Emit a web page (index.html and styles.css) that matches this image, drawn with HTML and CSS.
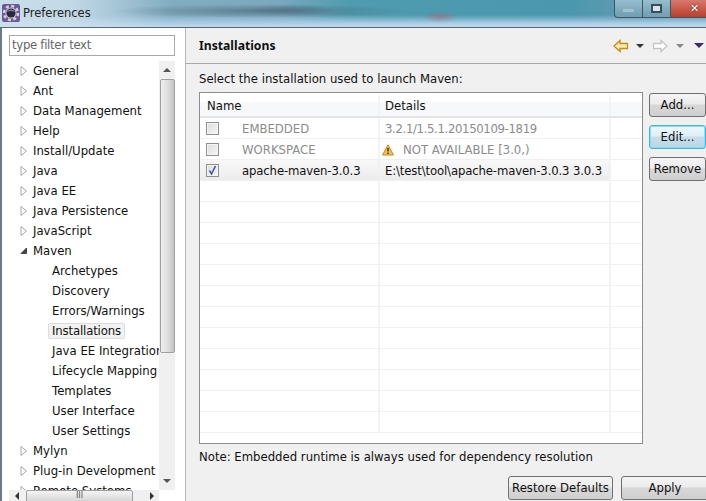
FILE: index.html
```html
<!DOCTYPE html>
<html lang="en">
<head>
  <meta charset="UTF-8">
  <title>Preferences</title>
  <link rel="stylesheet" href="styles.css">
</head>
<body>
  <div class="window">
    <div class="titlebar">
      <svg class="app-icon" width="18" height="18" viewBox="0 0 18 18">
        <rect x="0" y="0" width="18" height="18" rx="2" fill="#6a5a9c"/>
        <circle cx="9" cy="9" r="7" fill="none" stroke="#dcd8c8" stroke-width="2.4" stroke-dasharray="3 2.5"/>
        <circle cx="9" cy="9" r="5.6" fill="#d0ccc0"/>
        <circle cx="9" cy="9" r="4.6" fill="#2c2848"/>
        <path d="M5 8a4.500 4.500 0 0 1 8 0a6 3 0 0 0-8 0z" fill="#8a84b0"/>
      </svg>
      <span class="title">Preferences</span>
      <div class="controls">
        <div class="ctl"><span class="ctl-min"></span></div>
        <div class="ctl"><span class="ctl-max"></span></div>
        <div class="ctl ctl-close">&#10005;</div>
      </div>
    </div>

    <div class="content">
      <!-- left tree -->
      <div class="side">
        <div class="filter">type filter text</div>
        <div class="tree-wrap">
          <div class="tree-main">
            <ul class="tree">
              <li><svg class="tw" viewBox="0 0 8 10"><path d="M1 .5L6.500 5L1 9.500z" fill="#fff" stroke="#a6a6a6"/></svg>General</li>
              <li><svg class="tw" viewBox="0 0 8 10"><path d="M1 .5L6.500 5L1 9.500z" fill="#fff" stroke="#a6a6a6"/></svg>Ant</li>
              <li><svg class="tw" viewBox="0 0 8 10"><path d="M1 .5L6.500 5L1 9.500z" fill="#fff" stroke="#a6a6a6"/></svg>Data Management</li>
              <li><svg class="tw" viewBox="0 0 8 10"><path d="M1 .5L6.500 5L1 9.500z" fill="#fff" stroke="#a6a6a6"/></svg>Help</li>
              <li><svg class="tw" viewBox="0 0 8 10"><path d="M1 .5L6.500 5L1 9.500z" fill="#fff" stroke="#a6a6a6"/></svg>Install/Update</li>
              <li><svg class="tw" viewBox="0 0 8 10"><path d="M1 .5L6.500 5L1 9.500z" fill="#fff" stroke="#a6a6a6"/></svg>Java</li>
              <li><svg class="tw" viewBox="0 0 8 10"><path d="M1 .5L6.500 5L1 9.500z" fill="#fff" stroke="#a6a6a6"/></svg>Java EE</li>
              <li><svg class="tw" viewBox="0 0 8 10"><path d="M1 .5L6.500 5L1 9.500z" fill="#fff" stroke="#a6a6a6"/></svg>Java Persistence</li>
              <li><svg class="tw" viewBox="0 0 8 10"><path d="M1 .5L6.500 5L1 9.500z" fill="#fff" stroke="#a6a6a6"/></svg>JavaScript</li>
              <li><svg class="tw" viewBox="0 0 8 10"><path d="M1 7.500L6.500 2V7.500z" fill="#444" stroke="#444"/></svg>Maven</li>
              <li class="child">Archetypes</li>
              <li class="child">Discovery</li>
              <li class="child">Errors/Warnings</li>
              <li class="child"><span class="current">Installations</span></li>
              <li class="child">Java EE Integration</li>
              <li class="child">Lifecycle Mapping</li>
              <li class="child">Templates</li>
              <li class="child">User Interface</li>
              <li class="child">User Settings</li>
              <li><svg class="tw" viewBox="0 0 8 10"><path d="M1 .5L6.500 5L1 9.500z" fill="#fff" stroke="#a6a6a6"/></svg>Mylyn</li>
              <li><svg class="tw" viewBox="0 0 8 10"><path d="M1 .5L6.500 5L1 9.500z" fill="#fff" stroke="#a6a6a6"/></svg>Plug-in Development</li>
              <li><svg class="tw" viewBox="0 0 8 10"><path d="M1 .5L6.500 5L1 9.500z" fill="#fff" stroke="#a6a6a6"/></svg>Remote Systems</li>
            </ul>
            <div class="vscroll">
              <span class="arrow-up"></span>
              <div class="vthumb"></div>
              <span class="arrow-down"></span>
            </div>
          </div>
          <div class="hscroll">
            <span class="arrow-left"></span>
            <div class="hthumb">III</div>
            <span class="arrow-right"></span>
          </div>
        </div>
      </div>

      <!-- right page -->
      <div class="page">
        <div class="page-head">
          <h1>Installations</h1>
          <div class="nav">
            <svg width="16" height="14" viewBox="0 0 16 14"><path d="M1 7L7 1.500V4.500H14.500V9.500H7V12.500z" fill="#ffe9b4" stroke="#c88a10" stroke-width="1.300"/></svg>
            <span class="drop"></span>
            <svg class="nav-fwd" width="16" height="14" viewBox="0 0 16 14"><path d="M15 7L9 1.500V4.500H1.500V9.500H9V12.500z" fill="#fff" stroke="#c4c4c4" stroke-width="1.300"/></svg>
            <span class="drop drop-off"></span>
            <span class="drop drop-menu"></span>
          </div>
        </div>

        <div class="page-body">
          <p class="intro">Select the installation used to launch Maven:</p>
          <div class="table-area">
            <div class="table">
              <div class="row row-head"><div class="cell cell-name">Name</div><div class="cell cell-details">Details</div><div class="cell"></div></div>
              <div class="row row-off">
                <div class="cell cell-name"><span class="check"></span><span class="inst">EMBEDDED</span></div>
                <div class="cell cell-details"><span class="version">3.2.1/1.5.1.20150109-1819</span></div><div class="cell"></div>
              </div>
              <div class="row row-off">
                <div class="cell cell-name"><span class="check"></span><span class="inst">WORKSPACE</span></div>
                <div class="cell cell-details">
                  <svg class="warn" width="12" height="12" viewBox="0 0 12 12"><path d="M6 .8L11.500 11H.5z" fill="#f4c24a" stroke="#c88a20"/><path d="M6 4v3.500M6 8.500v1.500" stroke="#4a3410" stroke-width="1.500"/></svg>
                  NOT AVAILABLE [3.0,)
                </div><div class="cell"></div>
              </div>
              <div class="row row-sel">
                <div class="cell cell-name">
                  <span class="check checked"><svg width="11" height="11" viewBox="0 0 11 11"><path d="M2.500 5.500L4.500 9L8.500 1" fill="none" stroke="#3a4ea8" stroke-width="1.500"/></svg></span>
                  <span class="inst">apache-maven-3.0.3</span>
                </div>
                <div class="cell cell-details">E:\test\tool\apache-maven-3.0.3 3.0.3</div><div class="cell"></div>
              </div>
              <div class="row"><div class="cell cell-name"></div><div class="cell cell-details"></div><div class="cell"></div></div>
              <div class="row"><div class="cell cell-name"></div><div class="cell cell-details"></div><div class="cell"></div></div>
              <div class="row"><div class="cell cell-name"></div><div class="cell cell-details"></div><div class="cell"></div></div>
              <div class="row"><div class="cell cell-name"></div><div class="cell cell-details"></div><div class="cell"></div></div>
              <div class="row"><div class="cell cell-name"></div><div class="cell cell-details"></div><div class="cell"></div></div>
              <div class="row"><div class="cell cell-name"></div><div class="cell cell-details"></div><div class="cell"></div></div>
              <div class="row"><div class="cell cell-name"></div><div class="cell cell-details"></div><div class="cell"></div></div>
              <div class="row"><div class="cell cell-name"></div><div class="cell cell-details"></div><div class="cell"></div></div>
              <div class="row"><div class="cell cell-name"></div><div class="cell cell-details"></div><div class="cell"></div></div>
              <div class="row"><div class="cell cell-name"></div><div class="cell cell-details"></div><div class="cell"></div></div>
              <div class="row"><div class="cell cell-name"></div><div class="cell cell-details"></div><div class="cell"></div></div>
              <div class="row"><div class="cell cell-name"></div><div class="cell cell-details"></div><div class="cell"></div></div>
            </div>
            <div class="side-buttons">
              <button class="btn">Add...</button>
              <button class="btn btn-focus">Edit...</button>
              <button class="btn">Remove</button>
            </div>
          </div>
          <p class="note">Note: Embedded runtime is always used for dependency resolution</p>
          <div class="bottom-buttons">
            <button class="btn btn-restore">Restore Defaults</button>
            <button class="btn btn-apply">Apply</button>
          </div>
        </div>
      </div>
    </div>
  </div>
</body>
</html>
```

FILE: styles.css
```css
* {
    box-sizing: border-box;
}
html, body {
    margin: 0;
    height: 100%;
    overflow: hidden;
}
body {
    color: #111;
    font-family: "DejaVu Sans", sans-serif;
    font-size: 11.7px;
}
.window {
    display: flex;
    flex-direction: column;
    height: 501px;
    overflow: hidden;
    width: 706px;
}

/* title bar */
.titlebar {
    align-items: center;
    background:
        radial-gradient(ellipse 150px 7px at 260px 11px, rgba(70,90,110,.55), rgba(70,90,110,0)),
        radial-gradient(ellipse 45px 6px at 290px 10px, rgba(50,80,100,.35), rgba(50,80,100,0)),
        linear-gradient(90deg, rgba(205,224,236,.95) 0, rgba(205,224,236,.85) 70px, rgba(205,224,236,0) 170px),
        radial-gradient(ellipse 18px 6px at 440px 17px, rgba(170,100,110,.5), rgba(170,100,110,0)),
        linear-gradient(180deg, rgba(168,204,228,0) 15px, #a8cce4 23px, #c0d8ea 27px),
        linear-gradient(90deg, #86b0c4 100px, #7aa8bc 280px, #4f9bb0 350px, #4b97ad 570px, #5a9ab0 610px);
    border-bottom: 1px solid #566878;
    display: flex;
    flex: none;
    height: 28px;
    padding-left: 2px;
}
.app-icon {
    margin-bottom: 2px;
}
.title {
    color: #222;
    font-size: 11.5px;
    margin-bottom: 2px;
    margin-left: 3px;
}
.controls {
    align-self: flex-start;
    background: linear-gradient(180deg, rgba(190,215,228,.6), rgba(120,160,178,.6));
    border: 1px solid #44545f;
    border-radius: 0 0 4px 4px;
    border-top: 0;
    display: flex;
    flex: none;
    height: 18px;
    margin-left: auto;
    margin-right: -13px;
    overflow: hidden;
}
.ctl {
    align-items: center;
    border-right: 1px solid #44545f;
    display: flex;
    justify-content: center;
    width: 28px;
}
.ctl-min {
    background: #a8c0cc;
    height: 3px;
    margin-top: 3px;
    width: 11px;
}
.ctl-max {
    background: #d8e2e8;
    border: 2px solid #3c4c58;
    height: 9px;
    width: 11px;
}
.ctl-close {
    background: linear-gradient(180deg, #d8786c, #b8402c);
    border-right: 0;
    color: #fff;
    font-size: 11px;
    font-weight: bold;
    text-shadow: 0 0 2px #402018;
    width: 47px;
}

.content {
    border-left: 2px solid #6a7a88;
    display: flex;
    flex: 1;
    min-height: 0;
}

/* left side */
.side {
    background: #fff;
    border-right: 1px solid #b8b8b8;
    display: flex;
    flex: none;
    flex-direction: column;
    height: 473px;
    padding: 7px 10px 0 7px;
    width: 184px;
}
.filter {
    border: 1px solid #a8a8a8;
    color: #666;
    font-size: 11.7px;
    height: 21px;
    letter-spacing: -.3px;
    line-height: 19px;
    padding-left: 2px;
}
.tree-wrap {
    display: flex;
    flex: 1;
    flex-direction: column;
    margin-top: 5px;
    min-height: 0;
}
.tree-main {
    display: flex;
    flex: 1;
    min-height: 0;
    overflow: hidden;
}
.tree {
    flex: 1;
    list-style: none;
    margin: 0;
    min-width: 0;
    overflow: hidden;
    padding: 0;
    white-space: nowrap;
}
.tree li {
    align-items: center;
    display: flex;
    height: 20px;
    padding-left: 11px;
}
.tree .tw {
    flex: none;
    height: 10px;
    margin-right: 5px;
    width: 8px;
}
.tree .child {
    padding-left: 43px;
}
.current {
    background: #f2f2f2;
    border: 1px solid #dcdcdc;
    border-radius: 2px;
    letter-spacing: -.15px;
    margin-left: -4px;
    padding: 0 3px;
}
.vscroll {
    align-items: center;
    background: #f0f0f0;
    display: flex;
    flex: none;
    flex-direction: column;
    padding-top: 7px;
    width: 16px;
}
.vthumb {
    background: linear-gradient(90deg, #f0f0f0, #dcdcdc 55%, #c4c4c4);
    border: 1px solid #a0a0a0;
    border-radius: 2px;
    height: 274px;
    margin-top: 7px;
    width: 15px;
}
.arrow-up, .arrow-down, .arrow-left, .arrow-right {
    flex: none;
    height: 0;
    width: 0;
}
.arrow-up {
    border-bottom: 4px solid #555;
    border-left: 4px solid transparent;
    border-right: 4px solid transparent;
}
.arrow-down {
    border-left: 4px solid transparent;
    border-right: 4px solid transparent;
    border-top: 4px solid #555;
    margin-bottom: 7px;
    margin-top: auto;
}
.hscroll {
    align-items: flex-start;
    background: #f0f0f0;
    display: flex;
    flex: none;
    height: 11px;
    margin-right: 16px;
    padding: 0 5px 0 6px;
}
.arrow-left {
    border-bottom: 4px solid transparent;
    border-right: 4px solid #333;
    border-top: 4px solid transparent;
    margin-top: 2px;
}
.arrow-right {
    border-bottom: 4px solid transparent;
    border-left: 4px solid #333;
    border-top: 4px solid transparent;
    margin-left: auto;
    margin-top: 2px;
}
.hthumb {
    background: linear-gradient(180deg, #f4f4f4, #d4d4d4);
    border: 1px solid #a0a0a0;
    border-radius: 2px;
    color: #555;
    font-size: 8px;
    height: 13px;
    line-height: 10px;
    margin-left: 7px;
    text-align: center;
    width: 107px;
}

/* right page */
.page {
    background: #f0f0f0;
    display: flex;
    flex: 1;
    flex-direction: column;
    min-width: 0;
}
.page-head {
    align-items: center;
    border-bottom: 1px solid #a8a8a8;
    display: flex;
    flex: none;
    height: 36px;
    padding: 0 2px 0 13px;
}
.page-head h1 {
    font-family: "Noto Sans", sans-serif;
    font-size: 12.2px;
    font-weight: bold;
    margin: 0;
}
.nav {
    align-items: center;
    display: flex;
    margin-left: auto;
}
.nav-fwd {
    margin-left: 8px;
}
.drop {
    border-left: 4px solid transparent;
    border-right: 4px solid transparent;
    border-top: 4px solid #333;
    height: 0;
    margin-left: 7px;
    width: 0;
}
.nav-fwd + .drop {
    margin-left: 8px;
}
.drop-off {
    border-top-color: #888;
}
.nav .drop-menu {
    border-left-width: 5px;
    border-right-width: 5px;
    border-top: 5px solid #3a2a6a;
    margin-left: 10px;
}
.page-body {
    display: flex;
    flex: 1;
    flex-direction: column;
    min-height: 0;
    padding: 7px 0 0 13px;
}
.intro {
    height: 21px;
    line-height: 16px;
    margin: 0;
}
.table-area {
    display: flex;
    flex: none;
    gap: 6px;
    height: 352px;
}
.table {
    background: #fff;
    border: 1px solid #8c8c8c;
    flex: none;
    height: 352px;
    overflow: hidden;
    width: 444px;
}
.row {
    border-bottom: 1px solid #f0f0f0;
    display: flex;
    height: 21px;
}
.row-head {
    background: linear-gradient(180deg, #fff 9px, #f7f8f9 9px);
    border-bottom: 2px solid #e4e4e4;
    height: 25px;
    padding-top: 2px;
}
.cell {
    align-items: center;
    display: flex;
    flex: 1;
    white-space: nowrap;
}
.row-off .cell, .row-sel .cell {
    padding-top: 1px;
}
.cell-name {
    border-right: 2px solid #f0f4fa;
    flex: none;
    padding-left: 6px;
    width: 180px;
}
.row-head .cell-name {
    padding-left: 7px;
}
.cell-details {
    border-right: 2px solid #f0f4fa;
    flex: none;
    padding-left: 5px;
    width: 231px;
}
.row-off {
    color: #8c8c8c;
}
.version {
    letter-spacing: -.35px;
}
.row-sel .cell-name, .row-sel .cell-details {
    background: linear-gradient(180deg, #f8f8f8, #ececec);
    border-right-color: #f0f0f0;
    letter-spacing: -.14px;
}
.row-sel .cell-details {
    border-radius: 0 3px 3px 0;
}
.check {
    background: linear-gradient(135deg, #dcdcdc, #f6f6f6);
    border: 1px solid #8e8f8f;
    box-shadow: inset 0 0 0 1px #f4f4f4;
    display: inline-flex;
    flex: none;
    height: 13px;
    width: 13px;
}
.inst {
    margin-left: 23px;
}
.warn {
    flex: none;
    margin-left: -3px;
    margin-right: 9px;
}
.side-buttons {
    display: flex;
    flex-direction: column;
    gap: 8px;
    margin-top: 1px;
}
.btn {
    background: linear-gradient(180deg, #f4f4f4 0, #ececec 45%, #d8d8d8 50%, #cfcfcf 100%);
    border: 1px solid #707070;
    border-radius: 3px;
    color: #111;
    font-family: inherit;
    font-size: 11.7px;
    height: 24px;
    padding: 0;
    width: 57px;
}
.btn-focus {
    background: linear-gradient(180deg, #eef7fb 0, #e0eff6 45%, #c8deea 50%, #bcd6e4 100%);
    border-color: #3cb8e8;
    box-shadow: inset 0 0 0 1px #8adcf4;
}
.note {
    height: 22px;
    line-height: 16px;
    margin: 5px 0 0;
}
.bottom-buttons {
    display: flex;
    flex: none;
    gap: 8px;
    justify-content: flex-end;
    margin-right: -3px;
    margin-top: 5px;
}
.btn-restore {
    flex: none;
    width: 105px;
}
.btn-apply {
    flex: none;
    width: 88px;
}
```
